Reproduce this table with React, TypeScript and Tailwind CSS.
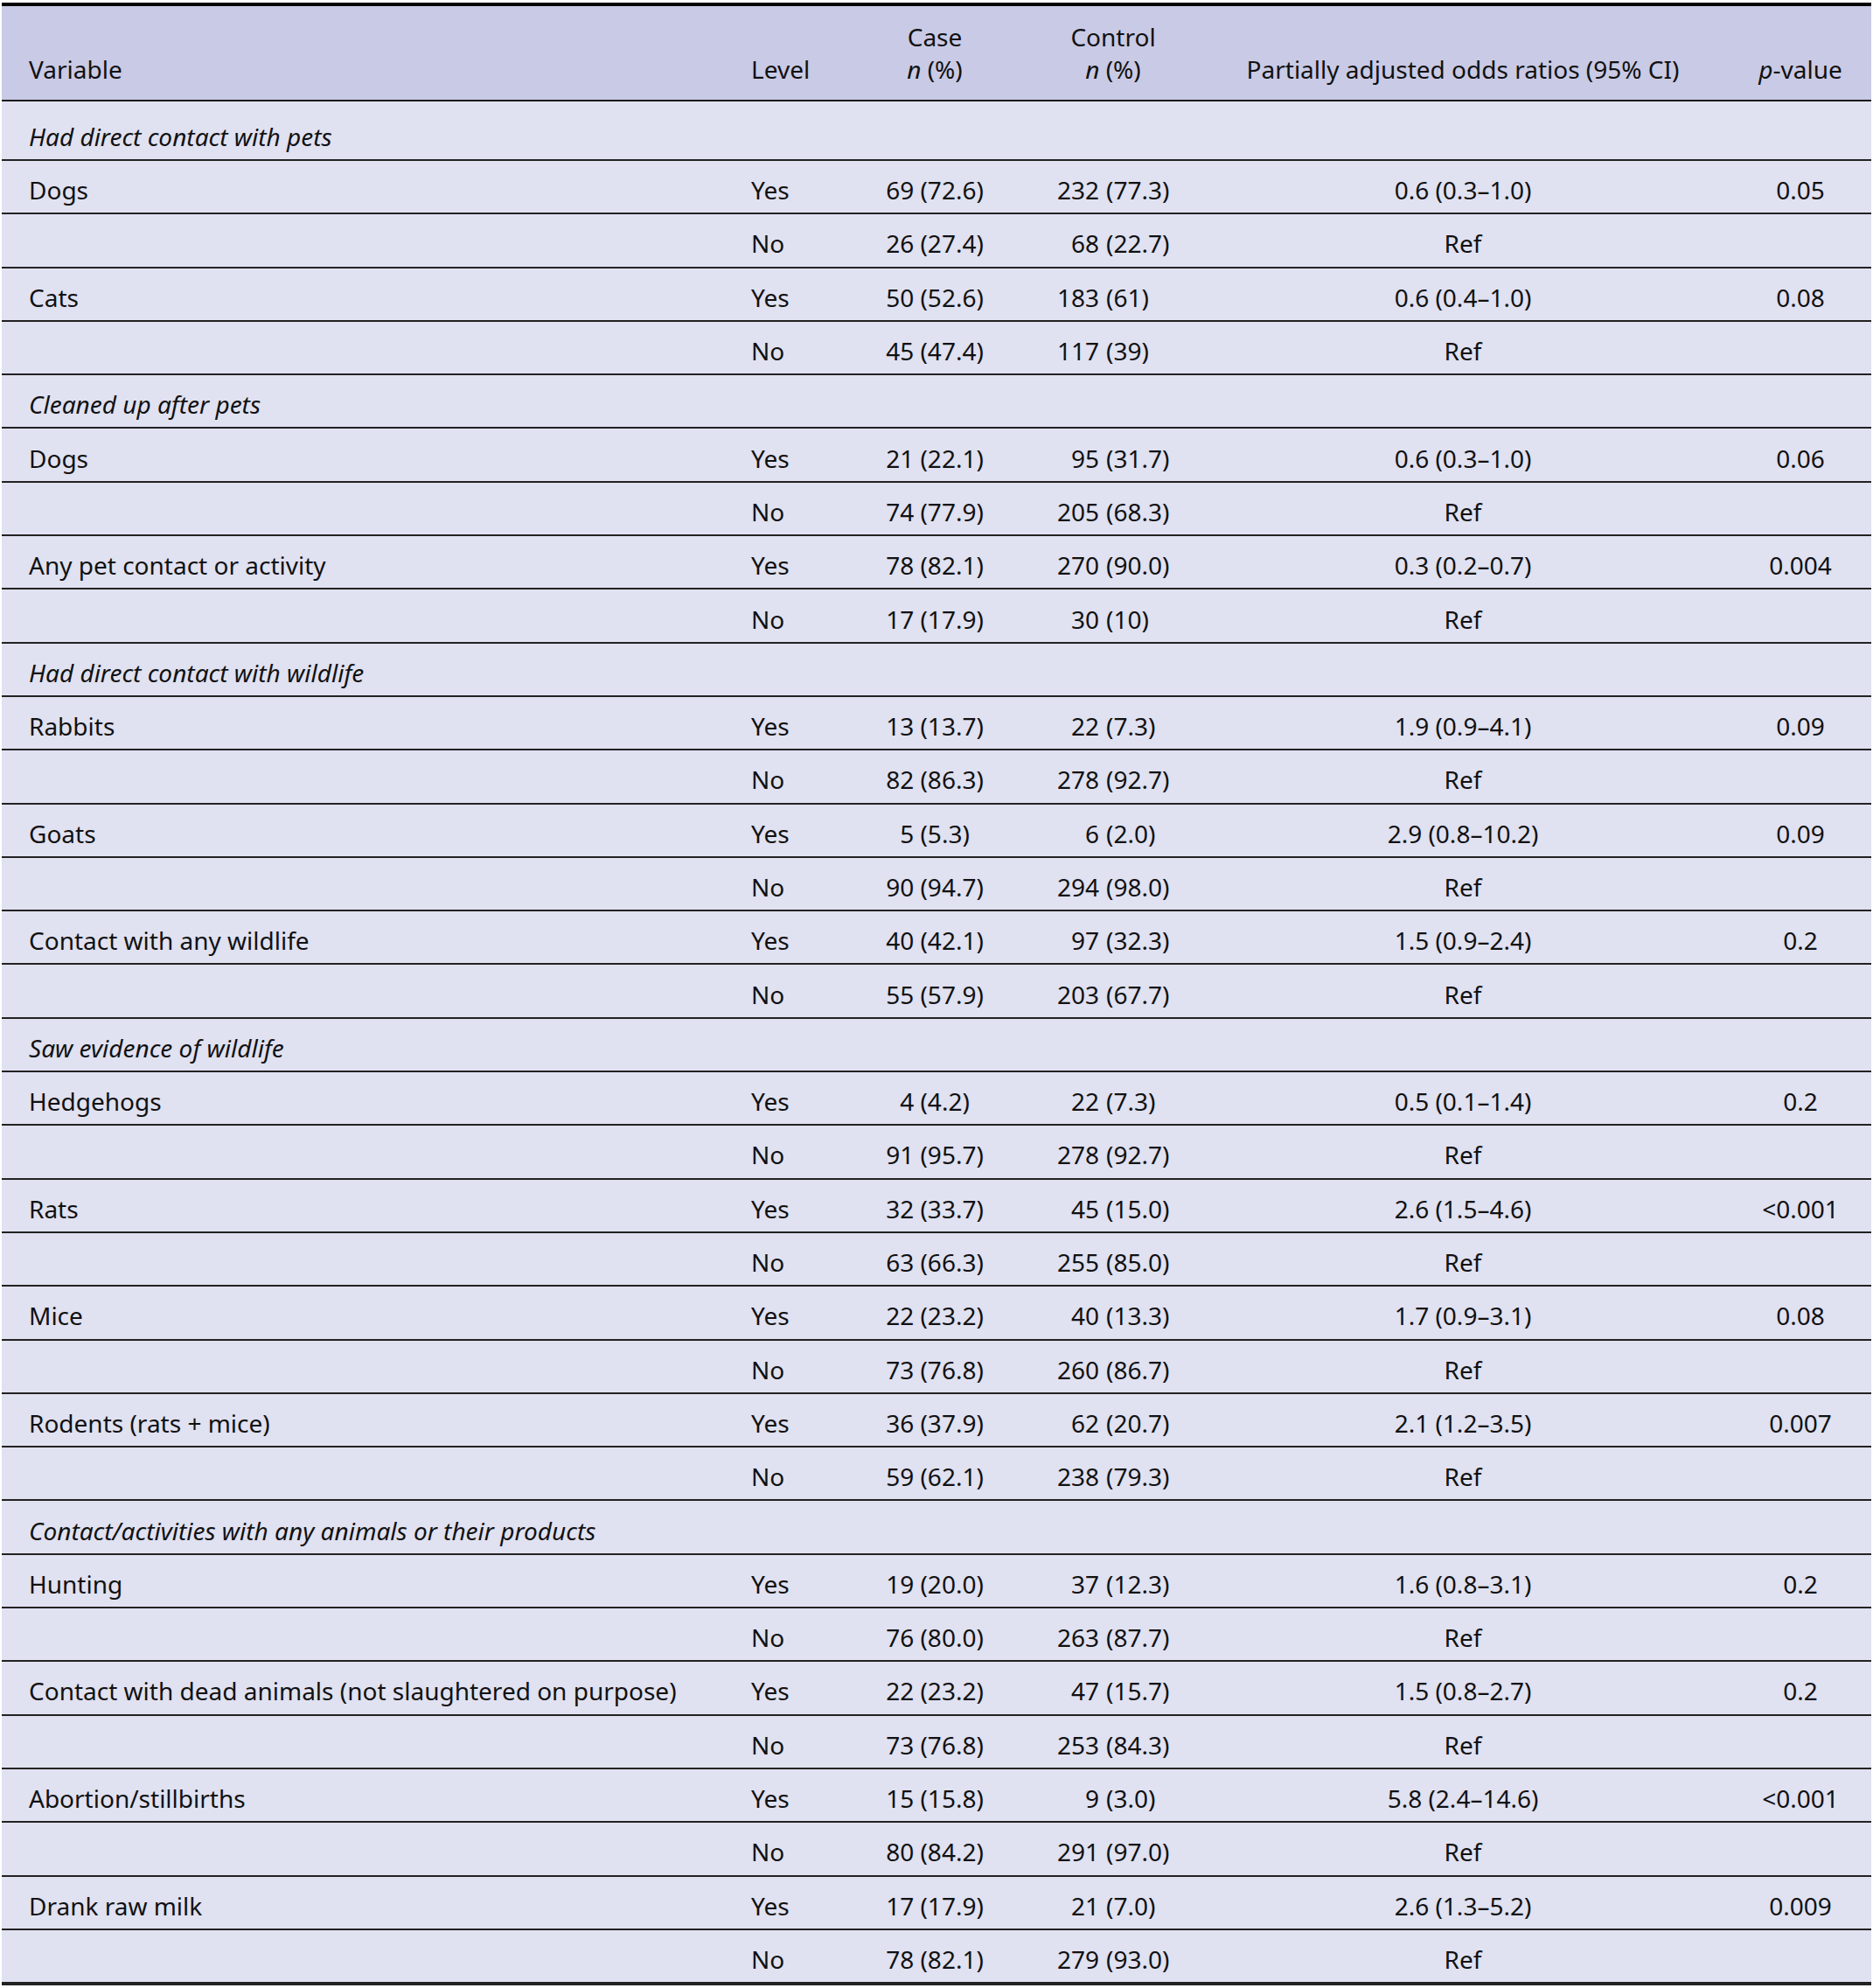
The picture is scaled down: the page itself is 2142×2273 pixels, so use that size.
import React from 'react';

type Row =
  | { section: string }
  | {
      variable?: string;
      level: 'Yes' | 'No';
      cases: string;
      ctrl: [string, string];
      or: string;
      p?: string;
    };

const rows: Row[] = [
  { section: 'Had direct contact with pets' },
  { variable: 'Dogs', level: 'Yes', cases: '69 (72.6)', ctrl: ['232', '(77.3)'], or: '0.6 (0.3–1.0)', p: '0.05' },
  { level: 'No', cases: '26 (27.4)', ctrl: ['68', '(22.7)'], or: 'Ref' },
  { variable: 'Cats', level: 'Yes', cases: '50 (52.6)', ctrl: ['183', '(61)'], or: '0.6 (0.4–1.0)', p: '0.08' },
  { level: 'No', cases: '45 (47.4)', ctrl: ['117', '(39)'], or: 'Ref' },
  { section: 'Cleaned up after pets' },
  { variable: 'Dogs', level: 'Yes', cases: '21 (22.1)', ctrl: ['95', '(31.7)'], or: '0.6 (0.3–1.0)', p: '0.06' },
  { level: 'No', cases: '74 (77.9)', ctrl: ['205', '(68.3)'], or: 'Ref' },
  { variable: 'Any pet contact or activity', level: 'Yes', cases: '78 (82.1)', ctrl: ['270', '(90.0)'], or: '0.3 (0.2–0.7)', p: '0.004' },
  { level: 'No', cases: '17 (17.9)', ctrl: ['30', '(10)'], or: 'Ref' },
  { section: 'Had direct contact with wildlife' },
  { variable: 'Rabbits', level: 'Yes', cases: '13 (13.7)', ctrl: ['22', '(7.3)'], or: '1.9 (0.9–4.1)', p: '0.09' },
  { level: 'No', cases: '82 (86.3)', ctrl: ['278', '(92.7)'], or: 'Ref' },
  { variable: 'Goats', level: 'Yes', cases: '5 (5.3)', ctrl: ['6', '(2.0)'], or: '2.9 (0.8–10.2)', p: '0.09' },
  { level: 'No', cases: '90 (94.7)', ctrl: ['294', '(98.0)'], or: 'Ref' },
  { variable: 'Contact with any wildlife', level: 'Yes', cases: '40 (42.1)', ctrl: ['97', '(32.3)'], or: '1.5 (0.9–2.4)', p: '0.2' },
  { level: 'No', cases: '55 (57.9)', ctrl: ['203', '(67.7)'], or: 'Ref' },
  { section: 'Saw evidence of wildlife' },
  { variable: 'Hedgehogs', level: 'Yes', cases: '4 (4.2)', ctrl: ['22', '(7.3)'], or: '0.5 (0.1–1.4)', p: '0.2' },
  { level: 'No', cases: '91 (95.7)', ctrl: ['278', '(92.7)'], or: 'Ref' },
  { variable: 'Rats', level: 'Yes', cases: '32 (33.7)', ctrl: ['45', '(15.0)'], or: '2.6 (1.5–4.6)', p: '<0.001' },
  { level: 'No', cases: '63 (66.3)', ctrl: ['255', '(85.0)'], or: 'Ref' },
  { variable: 'Mice', level: 'Yes', cases: '22 (23.2)', ctrl: ['40', '(13.3)'], or: '1.7 (0.9–3.1)', p: '0.08' },
  { level: 'No', cases: '73 (76.8)', ctrl: ['260', '(86.7)'], or: 'Ref' },
  { variable: 'Rodents (rats + mice)', level: 'Yes', cases: '36 (37.9)', ctrl: ['62', '(20.7)'], or: '2.1 (1.2–3.5)', p: '0.007' },
  { level: 'No', cases: '59 (62.1)', ctrl: ['238', '(79.3)'], or: 'Ref' },
  { section: 'Contact/activities with any animals or their products' },
  { variable: 'Hunting', level: 'Yes', cases: '19 (20.0)', ctrl: ['37', '(12.3)'], or: '1.6 (0.8–3.1)', p: '0.2' },
  { level: 'No', cases: '76 (80.0)', ctrl: ['263', '(87.7)'], or: 'Ref' },
  { variable: 'Contact with dead animals (not slaughtered on purpose)', level: 'Yes', cases: '22 (23.2)', ctrl: ['47', '(15.7)'], or: '1.5 (0.8–2.7)', p: '0.2' },
  { level: 'No', cases: '73 (76.8)', ctrl: ['253', '(84.3)'], or: 'Ref' },
  { variable: 'Abortion/stillbirths', level: 'Yes', cases: '15 (15.8)', ctrl: ['9', '(3.0)'], or: '5.8 (2.4–14.6)', p: '<0.001' },
  { level: 'No', cases: '80 (84.2)', ctrl: ['291', '(97.0)'], or: 'Ref' },
  { variable: 'Drank raw milk', level: 'Yes', cases: '17 (17.9)', ctrl: ['21', '(7.0)'], or: '2.6 (1.3–5.2)', p: '0.009' },
  { level: 'No', cases: '78 (82.1)', ctrl: ['279', '(93.0)'], or: 'Ref' },
];

const cols = 'grid grid-cols-[836px_150px_162px_246px_554px_190px]';

export default function App() {
  return (
    <div
      className="w-[2142px] h-[2273px] bg-white pt-[3px] px-[2px] text-[28px] text-[#111]"
      style={{ fontFamily: '"Noto Sans", "Open Sans", sans-serif' }}
    >
      <div className="border-t-4 border-black">
        {/* header */}
        <div className={`${cols} h-[109px] bg-[#c9cae5] border-b-2 border-[#1a1a1a] items-end pb-[16px] leading-[37px]`}>
          <div className="pl-[31px]">Variable</div>
          <div className="pl-[21px]">Level</div>
          <div className="flex flex-col items-center">
            <span>Case</span>
            <span><i>n</i> (%)</span>
          </div>
          <div className="flex flex-col items-center">
            <span>Control</span>
            <span><i>n</i> (%)</span>
          </div>
          <div className="text-center">Partially adjusted odds ratios (95% CI)</div>
          <div className="text-center pl-[28px]"><i>p</i>-value</div>
        </div>

        {/* body */}
        {rows.map((r, i) => {
          const first = i === 0;
          const last = i === rows.length - 1;
          const base = `${cols} bg-[#e0e1f1] items-center leading-[37px] border-[#222] ${
            first ? 'h-[68px] pt-[15px] border-b-2' : last ? 'h-[63px] pt-[8px] border-b-4 border-[#111]' : 'h-[61.3px] pt-[8px] border-b-2'
          }`;
          if ('section' in r) {
            return (
              <div key={i} className={base}>
                <div className="col-span-6 pl-[31px] italic">{r.section}</div>
              </div>
            );
          }
          return (
            <div key={i} className={base}>
              <div className="pl-[31px] whitespace-nowrap">{r.variable ?? ''}</div>
              <div className="pl-[21px]">{r.level}</div>
              <div className="text-center">{r.cases}</div>
              <div className="flex">
                <span className="w-[107px] text-right">{r.ctrl[0]}</span>
                <span className="pl-[8px]">{r.ctrl[1]}</span>
              </div>
              <div className="text-center">{r.or}</div>
              <div className="text-center pl-[28px]">{r.p ?? ''}</div>
            </div>
          );
        })}
      </div>
    </div>
  );
}
